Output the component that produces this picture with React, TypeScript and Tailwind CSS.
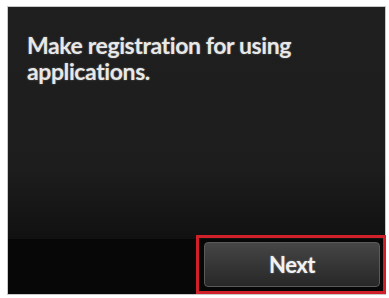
const App = () => {
  return (
    <div className="flex h-[298px] w-[389px] bg-white pb-[3px] pl-[7px] pr-[3px] pt-[6px] font-['Lato',sans-serif]">
      <div className="relative flex flex-1 flex-col border border-[#c8c8c8] bg-[#1e1e1e]">
        <div className="flex-1 bg-gradient-to-b from-[#1f1f1f] via-[#1d1d1d] via-70% to-[#111]">
          <p className="pl-[19px] pt-[25px] text-[23px] font-bold leading-[26px] tracking-[-0.4px] text-[#e8e8e8] [text-shadow:0_0_2px_rgba(255,255,255,0.35)]">
            Make registration for using
            <br />
            applications.
          </p>
        </div>
        <div className="flex h-[55px] justify-end bg-[#070707]">
          <div className="relative -mt-[4px] mb-[-1px] mr-[-1px] flex h-[59px] w-[190px] border-[3px] border-[#d0202a] p-[4px] pl-[5px] pr-[3px]">
            <button className="flex flex-1 items-center justify-center rounded-[4px] border border-[#5a5a5a] bg-gradient-to-b from-[#464646] via-[#363636] to-[#282828] text-[22px] font-bold tracking-[-0.5px] text-[#f2f2f2] [text-shadow:0_0_2px_rgba(255,255,255,0.4)]">
              Next
            </button>
          </div>
        </div>
      </div>
    </div>
  );
};

export default App;
